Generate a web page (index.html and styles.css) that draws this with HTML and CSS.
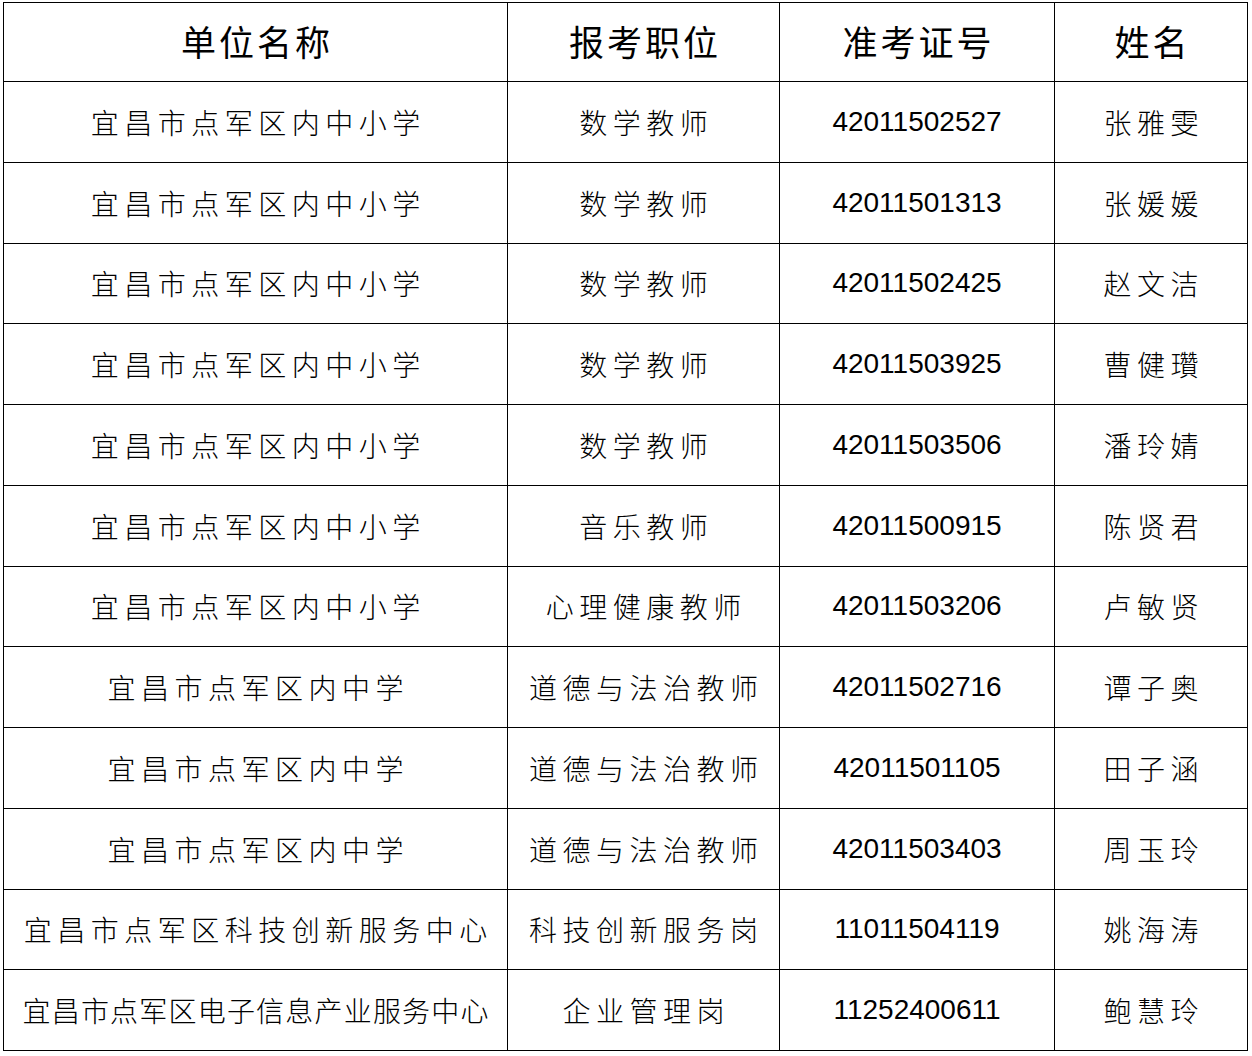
FILE: index.html
```html
<!DOCTYPE html>
<html lang="zh-CN">
<head>
<meta charset="utf-8">
<title>名单</title>
<link rel="stylesheet" href="styles.css">
</head>
<body>
<table class="list">
  <colgroup>
    <col class="c1"><col class="c2"><col class="c3"><col class="c4">
  </colgroup>
  <thead>
    <tr class="head">
      <th>单位名称</th><th>报考职位</th><th>准考证号</th><th>姓名</th>
    </tr>
  </thead>
  <tbody>
    <tr><td>宜昌市点军区内中小学</td><td>数学教师</td><td class="num">42011502527</td><td>张雅雯</td></tr>
    <tr><td>宜昌市点军区内中小学</td><td>数学教师</td><td class="num">42011501313</td><td>张媛媛</td></tr>
    <tr><td>宜昌市点军区内中小学</td><td>数学教师</td><td class="num">42011502425</td><td>赵文洁</td></tr>
    <tr><td>宜昌市点军区内中小学</td><td>数学教师</td><td class="num">42011503925</td><td>曹健瓚</td></tr>
    <tr><td>宜昌市点军区内中小学</td><td>数学教师</td><td class="num">42011503506</td><td>潘玲婧</td></tr>
    <tr><td>宜昌市点军区内中小学</td><td>音乐教师</td><td class="num">42011500915</td><td>陈贤君</td></tr>
    <tr><td>宜昌市点军区内中小学</td><td>心理健康教师</td><td class="num">42011503206</td><td>卢敏贤</td></tr>
    <tr><td>宜昌市点军区内中学</td><td>道德与法治教师</td><td class="num">42011502716</td><td>谭子奥</td></tr>
    <tr><td>宜昌市点军区内中学</td><td>道德与法治教师</td><td class="num">42011501105</td><td>田子涵</td></tr>
    <tr><td>宜昌市点军区内中学</td><td>道德与法治教师</td><td class="num">42011503403</td><td>周玉玲</td></tr>
    <tr><td>宜昌市点军区科技创新服务中心</td><td>科技创新服务岗</td><td class="num">11011504119</td><td>姚海涛</td></tr>
    <tr><td class="tight">宜昌市点军区电子信息产业服务中心</td><td>企业管理岗</td><td class="num">11252400611</td><td>鲍慧玲</td></tr>
  </tbody>
</table>
</body>
</html>
```

FILE: styles.css
```css
html, body {
  margin: 0;
  padding: 0;
  background: #ffffff;
}

body {
  padding: 2px 0 0 3px;
}

.list {
  border-collapse: collapse;
  table-layout: fixed;
  width: 1244px;
  color: #000;
  font-family: "Noto Sans CJK SC", "Noto Sans", sans-serif;
}

.c1 { width: 504px; }
.c2 { width: 272px; }
.c3 { width: 275px; }
.c4 { width: 193px; }

.list th,
.list td {
  border: 1px solid #000;
  padding: 0;
  text-align: center;
  vertical-align: middle;
  white-space: nowrap;
}

.list th {
  height: 79px;
  padding-bottom: 3px;
  box-sizing: border-box;
  font-size: 35px;
  font-weight: 400;
  letter-spacing: 3px;
  text-indent: 3px;
}

.list td {
  height: 79.75px;
  font-size: 28px;
  font-weight: 300;
  letter-spacing: 5.5px;
  text-indent: 5.5px;
}

.list td.tight {
  letter-spacing: 1.2px;
  text-indent: 1.2px;
}

.list td.num {
  font-family: "Liberation Sans", Arial, sans-serif;
  font-size: 28px;
  font-weight: 400;
  letter-spacing: 0;
  text-indent: 0;
}
```
